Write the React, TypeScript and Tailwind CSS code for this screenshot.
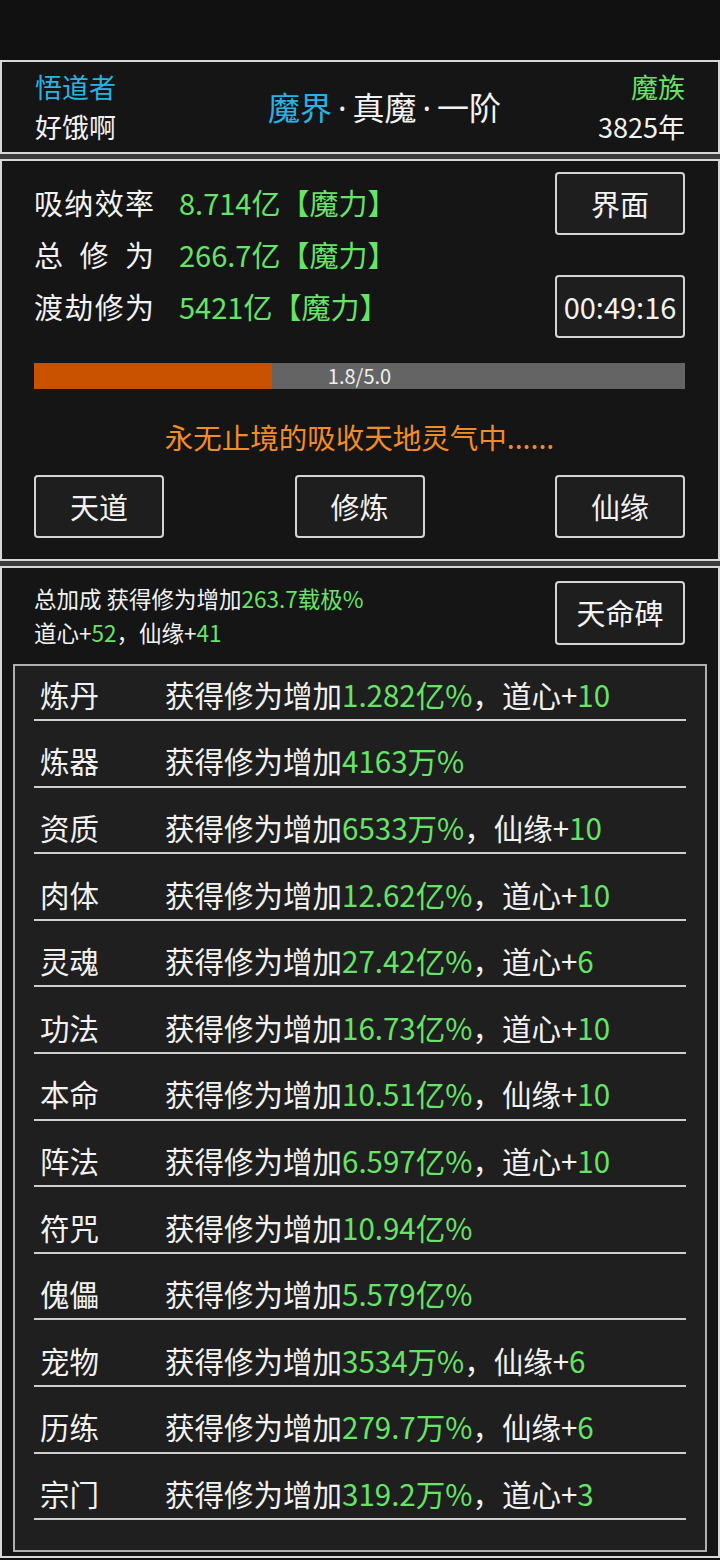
import React from "react";

const font = { fontFamily: '"Noto Sans CJK SC", "Noto Sans", sans-serif' };

const G = ({ children }: { children: React.ReactNode }) => (
  <span className="text-[#66e466]">{children}</span>
);

// narrow latin middle dot instead of the full-width CJK one
const Dot = () => (
  <span className="px-[6px]" style={{ fontFamily: '"Noto Sans", sans-serif' }}>
    ·
  </span>
);

const Btn = ({ children, className = "" }: { children: React.ReactNode; className?: string }) => (
  <div
    className={`w-[130px] h-[63px] flex items-center justify-center border-2 border-[#d4d4d4] rounded-[4px] bg-[#1e1e1e] text-[#f2f2f2] text-[29px] ${className}`}
  >
    {children}
  </div>
);

const bonuses: { name: string; value: string; extra?: [string, string] }[] = [
  { name: "炼丹", value: "1.282亿%", extra: ["道心+", "10"] },
  { name: "炼器", value: "4163万%" },
  { name: "资质", value: "6533万%", extra: ["仙缘+", "10"] },
  { name: "肉体", value: "12.62亿%", extra: ["道心+", "10"] },
  { name: "灵魂", value: "27.42亿%", extra: ["道心+", "6"] },
  { name: "功法", value: "16.73亿%", extra: ["道心+", "10"] },
  { name: "本命", value: "10.51亿%", extra: ["仙缘+", "10"] },
  { name: "阵法", value: "6.597亿%", extra: ["道心+", "10"] },
  { name: "符咒", value: "10.94亿%" },
  { name: "傀儡", value: "5.579亿%" },
  { name: "宠物", value: "3534万%", extra: ["仙缘+", "6"] },
  { name: "历练", value: "279.7万%", extra: ["仙缘+", "6"] },
  { name: "宗门", value: "319.2万%", extra: ["道心+", "3"] },
];

const stats = [
  { label: ["吸", "纳", "效", "率"], value: "8.714亿【魔力】" },
  { label: ["总", "修", "为"], value: "266.7亿【魔力】" },
  { label: ["渡", "劫", "修", "为"], value: "5421亿【魔力】" },
];

export default function App() {
  const progress = 1.8 / 5.0;

  return (
    <div className="w-[720px] min-h-[1560px] bg-[#111111] text-[#f2f2f2]" style={font}>
      <div className="h-[60px]" />

      {/* header */}
      <div className="h-[94px] border-2 border-[#d8d8d8] bg-[#151515] flex items-center px-[33px]">
        <div className="w-[139px] text-[27px] leading-[40px]">
          <div className="text-[#26b4e6]">悟道者</div>
          <div>好饿啊</div>
        </div>
        <div className="flex-1 text-center text-[32px]">
          <span className="text-[#26b4e6]">魔界</span>
          <Dot />
          真魔
          <Dot />
          一阶
        </div>
        <div className="w-[90px] text-right text-[27px] leading-[40px]">
          <div className="text-[#66e466]">魔族</div>
          <div>3825年</div>
        </div>
      </div>

      <div className="h-[5px] bg-[#3c3c3c]" />

      {/* cultivation */}
      <div className="h-[402px] border-2 border-[#d8d8d8] bg-[#151515] pl-[32px] pr-[33px]">
        <div className="flex justify-between">
          <div className="pt-[16px]">
            {stats.map((s) => (
              <div key={s.value} className="h-[52px] flex items-center text-[29px]">
                <div className="w-[120px] flex justify-between">
                  {s.label.map((c, i) => (
                    <span key={i}>{c}</span>
                  ))}
                </div>
                <span className="ml-[25px] text-[#66e466]">{s.value}</span>
              </div>
            ))}
          </div>
          <div className="pt-[11px] flex flex-col gap-[40px]">
            <Btn>界面</Btn>
            <Btn>00:49:16</Btn>
          </div>
        </div>

        <div className="mt-[25px] h-[26px] bg-[#646464] relative">
          <div className="h-full bg-[#c85200]" style={{ width: `${progress * 100 + 0.6}%` }} />
          <div className="absolute inset-0 flex items-center justify-center text-[20px] text-[#f0f0f0]">
            1.8/5.0
          </div>
        </div>

        <div className="mt-[30px] h-[36px] flex items-center justify-center text-[28.5px] text-[#f28c28]">
          永无止境的吸收天地灵气中......
        </div>

        <div className="mt-[20px] flex justify-between">
          <Btn>天道</Btn>
          <Btn>修炼</Btn>
          <Btn>仙缘</Btn>
        </div>
      </div>

      <div className="h-[5px] bg-[#3c3c3c]" />

      {/* bonuses */}
      <div className="h-[992px] border-2 border-[#d8d8d8] bg-[#151515] px-[11px]">
        <div className="flex justify-between items-start pt-[13px] pl-[21px] pr-[22px]">
          <div className="text-[22.5px] leading-[34px]">
            <div>
              总加成 获得修为增加<G>263.7载极%</G>
            </div>
            <div>
              道心+<G>52</G>，仙缘+<G>41</G>
            </div>
          </div>
          <Btn className="h-[64px]">天命碑</Btn>
        </div>

        <div className="mt-[15px] h-[888px] border-2 border-[#b0b0b0] bg-[#1f1f1f] px-[19px] pt-[3px] flex flex-col gap-[14.6px]">
          {bonuses.map((b) => (
            <div
              key={b.name}
              className="h-[52px] shrink-0 flex items-center border-b-2 border-[#cfcfcf] pl-[6px] text-[29.5px]"
            >
              <div className="w-[125px]">{b.name}</div>
              <div>
                获得修为增加<G>{b.value}</G>
                {b.extra && (
                  <>
                    ，{b.extra[0]}
                    <G>{b.extra[1]}</G>
                  </>
                )}
              </div>
            </div>
          ))}
        </div>
      </div>
    </div>
  );
}
